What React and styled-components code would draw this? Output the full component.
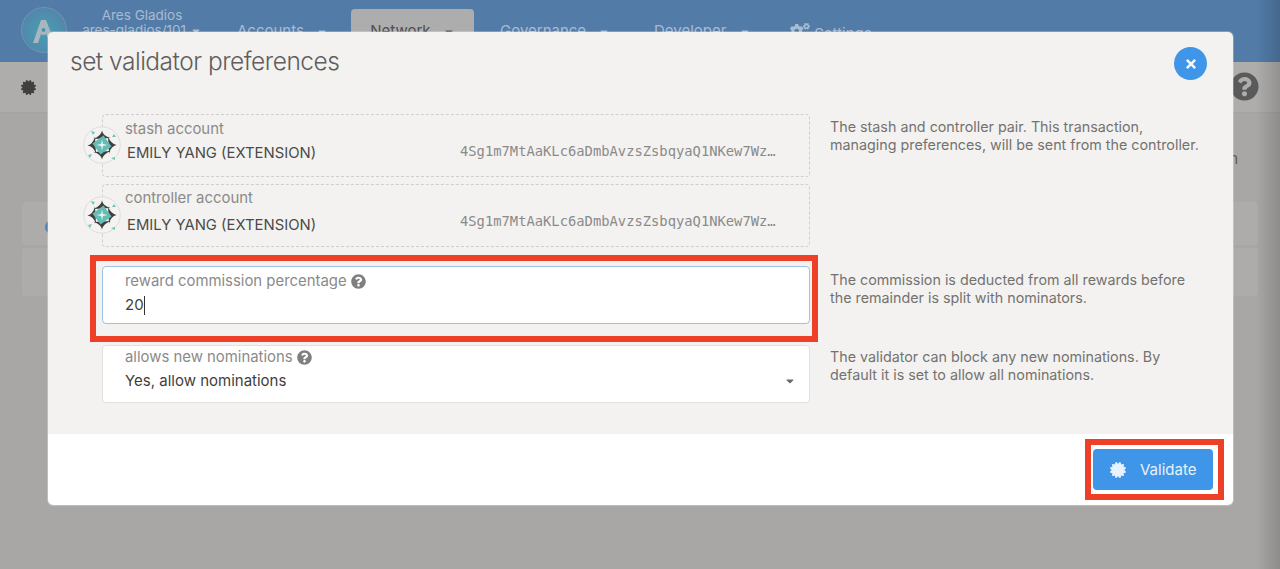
import React from "react";
import styled, { createGlobalStyle } from "styled-components";
import { FaCertificate, FaQuestionCircle, FaTimes, FaCogs, FaCaretDown } from "react-icons/fa";

const Global = createGlobalStyle`
  html, body {
    margin: 0;
    padding: 0;
    height: 100%;
    overflow: hidden;
    background: #a8a7a5;
    font-family: "Inter", "Liberation Sans", sans-serif;
  }
  * { box-sizing: border-box; }
`;

const Logo = () => (
  <LogoWrap viewBox="0 0 46 46">
    <defs>
      <radialGradient id="logoFill" cx="50%" cy="55%" r="55%">
        <stop offset="0%" stopColor="#45a0b2" />
        <stop offset="100%" stopColor="#5585aa" />
      </radialGradient>
    </defs>
    <circle cx="23" cy="23" r="22.5" fill="url(#logoFill)" stroke="#6a95b5" />
    <path d="M12 36 L20 13 H25 L34 36 H29 L24 24 H21 L17 36 Z" fill="#a9b6bf" />
    <circle cx="22.5" cy="23" r="5" fill="#a9b6bf" />
    <circle cx="22.5" cy="23" r="1.9" fill="#4a93ad" />
  </LogoWrap>
);

const Identicon = () => (
  <IdentWrap viewBox="0 0 38 38">
    <circle cx="19" cy="19" r="18.2" fill="#f4f3f1" stroke="#dedddb" />
    <path d="M8 5 L12 6 L10 9 Z M31 8 L33 11 L29 11 Z M5 29 L9 28 L7 32 Z M28 32 L32 31 L32 34 Z" fill="#6cc4bb" />
    <path
      d="M19 4.5 Q20 10 27.5 12 L10.5 13 Q18 10 19 4.5 Z M33.5 19 Q28 20 26 27.5 L25 10.5 Q28 18 33.5 19 Z M19 33.5 Q18 28 10.5 26 L27.5 25 Q20 28 19 33.5 Z M4.5 19.5 Q10 18 12 10.5 L13 27.5 Q10 20 4.5 19.5 Z"
      fill="#3f3f3f"
    />
    <path d="M20.5 9.5 L28.5 20.5 L17.5 28.5 L9.5 17.5 Z" fill="#63bdb5" />
    <path d="M19 13.5 L19.9 18.1 L24.5 19 L19.9 19.9 L19 24.5 L18.1 19.9 L13.5 19 L18.1 18.1 Z" fill="#f4f3f1" />
  </IdentWrap>
);

const AccountRow = ({ label, name, $pad, $gap, $lift }) => (
  <AccountBox $pad={$pad}>
    <Identicon />
    <Label>{label}</Label>
    <AccountLine $gap={$gap}>
      <AccountName>{name}</AccountName>
      <Address $lift={$lift}>4Sg1m7MtAaKLc6aDmbAvzsZsbqyaQ1NKew7Wz…</Address>
    </AccountLine>
  </AccountBox>
);

const App = () => {
  return (
    <Page>
      <Global />
      <TopBar>
        <Logo />
        <Chain>
          <span>Ares Gladios</span>
          <span>
            ares-gladios/101 <FaCaretDown size={12} />
          </span>
        </Chain>
        <NavItem $w={114}>Accounts <FaCaretDown size={12} /></NavItem>
        <NavItem $active>Network <FaCaretDown size={12} /></NavItem>
        <NavItem $w={134}>Governance <FaCaretDown size={12} /></NavItem>
        <NavItem $w={116}>Developer <FaCaretDown size={12} /></NavItem>
        <NavItem $nudge={-8}><FaCogs size={20} /> Settings</NavItem>
      </TopBar>
      <SubBar>
        <FaCertificate size={15} color="#3f3f3f" />
        <HelpIcon />
      </SubBar>
      <Content>
        <SideText>n</SideText>
        <Card $h={43}><BlueDot /></Card>
        <Card $h={48} />
      </Content>

      <Modal>
        <ModalBody>
          <TitleRow>
            <Title>set validator preferences</Title>
            <CloseButton><FaTimes size={14} /></CloseButton>
          </TitleRow>
          <Rows>
            <TwoCol>
              <Accounts>
                <AccountRow label="stash account" name="EMILY YANG (EXTENSION)" $pad={5} $gap={5} $lift={4} />
                <AccountRow label="controller account" name="EMILY YANG (EXTENSION)" $pad={4} $gap={8} $lift={8} />
              </Accounts>
              <Hint $pad={4}>
                The stash and controller pair. This transaction, managing
                preferences, will be sent from the controller.
              </Hint>
            </TwoCol>
            <TwoCol $top={19}>
              <Field $focus $pad={5}>
                <Label>
                  reward commission percentage <SmallHelp />
                </Label>
                <Value $top={5}>20<Caret /></Value>
                <RedBox $inset="-12px -9px -19px -13px" />
              </Field>
              <Hint $pad={5}>
                The commission is deducted from all rewards before the
                remainder is split with nominators.
              </Hint>
            </TwoCol>
            <TwoCol $top={21}>
              <Field $pad={2}>
                <Label>
                  allows new nominations <SmallHelp />
                </Label>
                <Value $top={5}>Yes, allow nominations</Value>
                <SelectCaret><FaCaretDown size={12} /></SelectCaret>
              </Field>
              <Hint $pad={3}>
                The validator can block any new nominations. By default it is
                set to allow all nominations.
              </Hint>
            </TwoCol>
          </Rows>
        </ModalBody>
        <ModalFooter>
          <ValidateButton>
            <FaCertificate size={16} />
            Validate
            <RedBox $inset="-10px -11px -10px -8px" />
          </ValidateButton>
        </ModalFooter>
      </Modal>
      <EdgeShade />
    </Page>
  );
};

export default App;

const Page = styled.div`
  position: relative;
  width: 1280px;
  height: 569px;
  overflow: hidden;
  background: #a8a7a5;
`;

const EdgeShade = styled.div`
  position: absolute;
  top: 0;
  right: 0;
  bottom: 0;
  width: 24px;
  background: linear-gradient(to right, rgba(0, 0, 0, 0), rgba(0, 0, 0, 0.16));
  pointer-events: none;
`;

const TopBar = styled.div`
  height: 62px;
  background: #527ba8;
  display: flex;
  align-items: flex-start;
  padding: 7px 0 0 21px;
  color: #a9bbcf;
  font-size: 15px;
`;

const LogoWrap = styled.svg`
  width: 46px;
  height: 46px;
  flex: none;
`;

const Chain = styled.div`
  width: 150px;
  margin-top: 1px;
  display: flex;
  flex-direction: column;
  align-items: center;
  line-height: 15px;
  font-size: 13.5px;
  svg { vertical-align: -2px; }
`;

const NavItem = styled.div`
  flex: none;
  height: ${(p) => (p.$active ? "53px" : "auto")};
  width: ${(p) => (p.$active ? "123px" : p.$w ? `${p.$w}px` : "auto")};
  margin-top: ${(p) => (p.$active ? "2px" : "14px")};
  margin-left: ${(p) => (p.$active ? "0" : `${20 + (p.$nudge || 0)}px`)};
  margin-right: ${(p) => (p.$active ? "6px" : "0")};
  padding-top: ${(p) => (p.$active ? "12px" : "0")};
  text-align: ${(p) => (p.$active ? "center" : "left")};
  background: ${(p) => (p.$active ? "#adadad" : "transparent")};
  color: ${(p) => (p.$active ? "#4f4f4f" : "#a9bbcf")};
  border-radius: 4px 4px 0 0;
  svg { vertical-align: -2px; margin-left: 8px; }
`;

const SubBar = styled.div`
  height: 51px;
  background: #aeadac;
  border-bottom: 1px solid #a5a4a2;
  display: flex;
  align-items: center;
  justify-content: space-between;
  padding: 0 21px 0 21px;
`;

const HelpIcon = styled(FaQuestionCircle)`
  width: 29px;
  height: 29px;
  color: #5a5a5a;
  margin-top: -1px;
`;

const Content = styled.div`
  display: flex;
  flex-direction: column;
  align-items: center;
  gap: 3px;
  padding-top: 89px;
  position: relative;
`;

const SideText = styled.div`
  position: absolute;
  top: 36px;
  right: 42px;
  color: #5a5a5a;
  font-size: 15px;
`;

const Card = styled.div`
  position: relative;
  width: 1236px;
  height: ${(p) => p.$h}px;
  background: #adacab;
  border-radius: 4px;
`;

const BlueDot = styled.div`
  position: absolute;
  left: 23px;
  top: 18px;
  width: 14px;
  height: 14px;
  border-radius: 50%;
  background: #4f7fb4;
`;

const Modal = styled.div`
  position: absolute;
  left: 48px;
  top: 32px;
  width: 1185px;
  height: 473px;
  border-radius: 5px;
  display: flex;
  flex-direction: column;
  box-shadow: 0 0 0 1px rgba(255, 255, 255, 0.25);
`;

const ModalBody = styled.div`
  height: 402px;
  background: #f3f2f0;
  border-radius: 5px 5px 0 0;
  padding: 0 26px 0 22px;
`;

const TitleRow = styled.div`
  height: 82px;
  display: flex;
  justify-content: space-between;
  align-items: flex-start;
  padding-top: 14px;
`;

const Title = styled.h1`
  margin: 0;
  font-size: 24.5px;
  line-height: 30px;
  font-weight: 300;
  color: #5f5e5d;
  letter-spacing: -0.5px;
`;

const CloseButton = styled.div`
  width: 33px;
  height: 33px;
  margin-top: 1px;
  border-radius: 50%;
  background: #3f96e8;
  color: #f3f7fc;
  display: flex;
  align-items: center;
  justify-content: center;
`;

const Rows = styled.div`
  display: flex;
  flex-direction: column;
  padding-left: 32px;
`;

const TwoCol = styled.div`
  display: grid;
  grid-template-columns: 708px 372px;
  column-gap: 20px;
  margin-top: ${(p) => p.$top || 0}px;
`;

const Accounts = styled.div`
  display: flex;
  flex-direction: column;
  gap: 7px;
`;

const AccountBox = styled.div`
  position: relative;
  height: 63px;
  border: 1px dashed #cfcecc;
  border-radius: 4px;
  padding: ${(p) => p.$pad}px 0 0 22px;
`;

const IdentWrap = styled.svg`
  position: absolute;
  left: -20px;
  top: 11px;
  width: 38px;
  height: 38px;
`;

const Label = styled.div`
  font-size: 14.9px;
  line-height: 18px;
  color: #8b8a89;
  white-space: nowrap;
  display: flex;
  align-items: center;
  gap: 4px;
`;

const AccountLine = styled.div`
  display: flex;
  align-items: center;
  margin-top: ${(p) => p.$gap}px;
  padding-left: 2px;
`;

const AccountName = styled.div`
  width: 333px;
  font-size: 14.85px;
  line-height: 20px;
  color: #4b4a49;
  white-space: nowrap;
`;

const Address = styled.div`
  font-family: "DejaVu Sans Mono", "Liberation Mono", monospace;
  font-size: 13.8px;
  line-height: 12px;
  margin-bottom: ${(p) => p.$lift}px;
  color: #8b8a89;
  white-space: nowrap;
`;

const Hint = styled.div`
  font-size: 14.3px;
  line-height: 17.5px;
  color: #737271;
  padding-top: ${(p) => p.$pad}px;
`;

const Field = styled.div`
  position: relative;
  height: 58px;
  background: #fff;
  border: 1px solid ${(p) => (p.$focus ? "#9dc1e0" : "#e2e1df")};
  border-radius: 4px;
  padding: ${(p) => p.$pad}px 0 0 22px;
`;

const SmallHelp = styled(FaQuestionCircle)`
  width: 15px;
  height: 15px;
  color: #7f7f7f;
`;

const Value = styled.div`
  font-size: 15px;
  line-height: 20px;
  margin-top: ${(p) => p.$top}px;
  color: #3f3e3d;
  display: flex;
  align-items: center;
`;

const Caret = styled.span`
  width: 1px;
  height: 19px;
  background: #333;
`;

const SelectCaret = styled.div`
  position: absolute;
  right: 13px;
  top: 25px;
  color: #6a6a6a;
`;

const RedBox = styled.div`
  position: absolute;
  inset: ${(p) => p.$inset};
  border: 6px solid #ee4027;
  pointer-events: none;
`;

const ModalFooter = styled.div`
  flex: 1;
  background: #fff;
  border-radius: 0 0 5px 5px;
  display: flex;
  justify-content: flex-end;
  align-items: flex-start;
  padding: 15px 20px 0 0;
`;

const ValidateButton = styled.div`
  position: relative;
  width: 120px;
  height: 41px;
  background: #3f96e8;
  border-radius: 4px;
  color: #e8f2fc;
  font-size: 15px;
  display: flex;
  align-items: center;
  gap: 14px;
  padding-left: 17px;
`;
